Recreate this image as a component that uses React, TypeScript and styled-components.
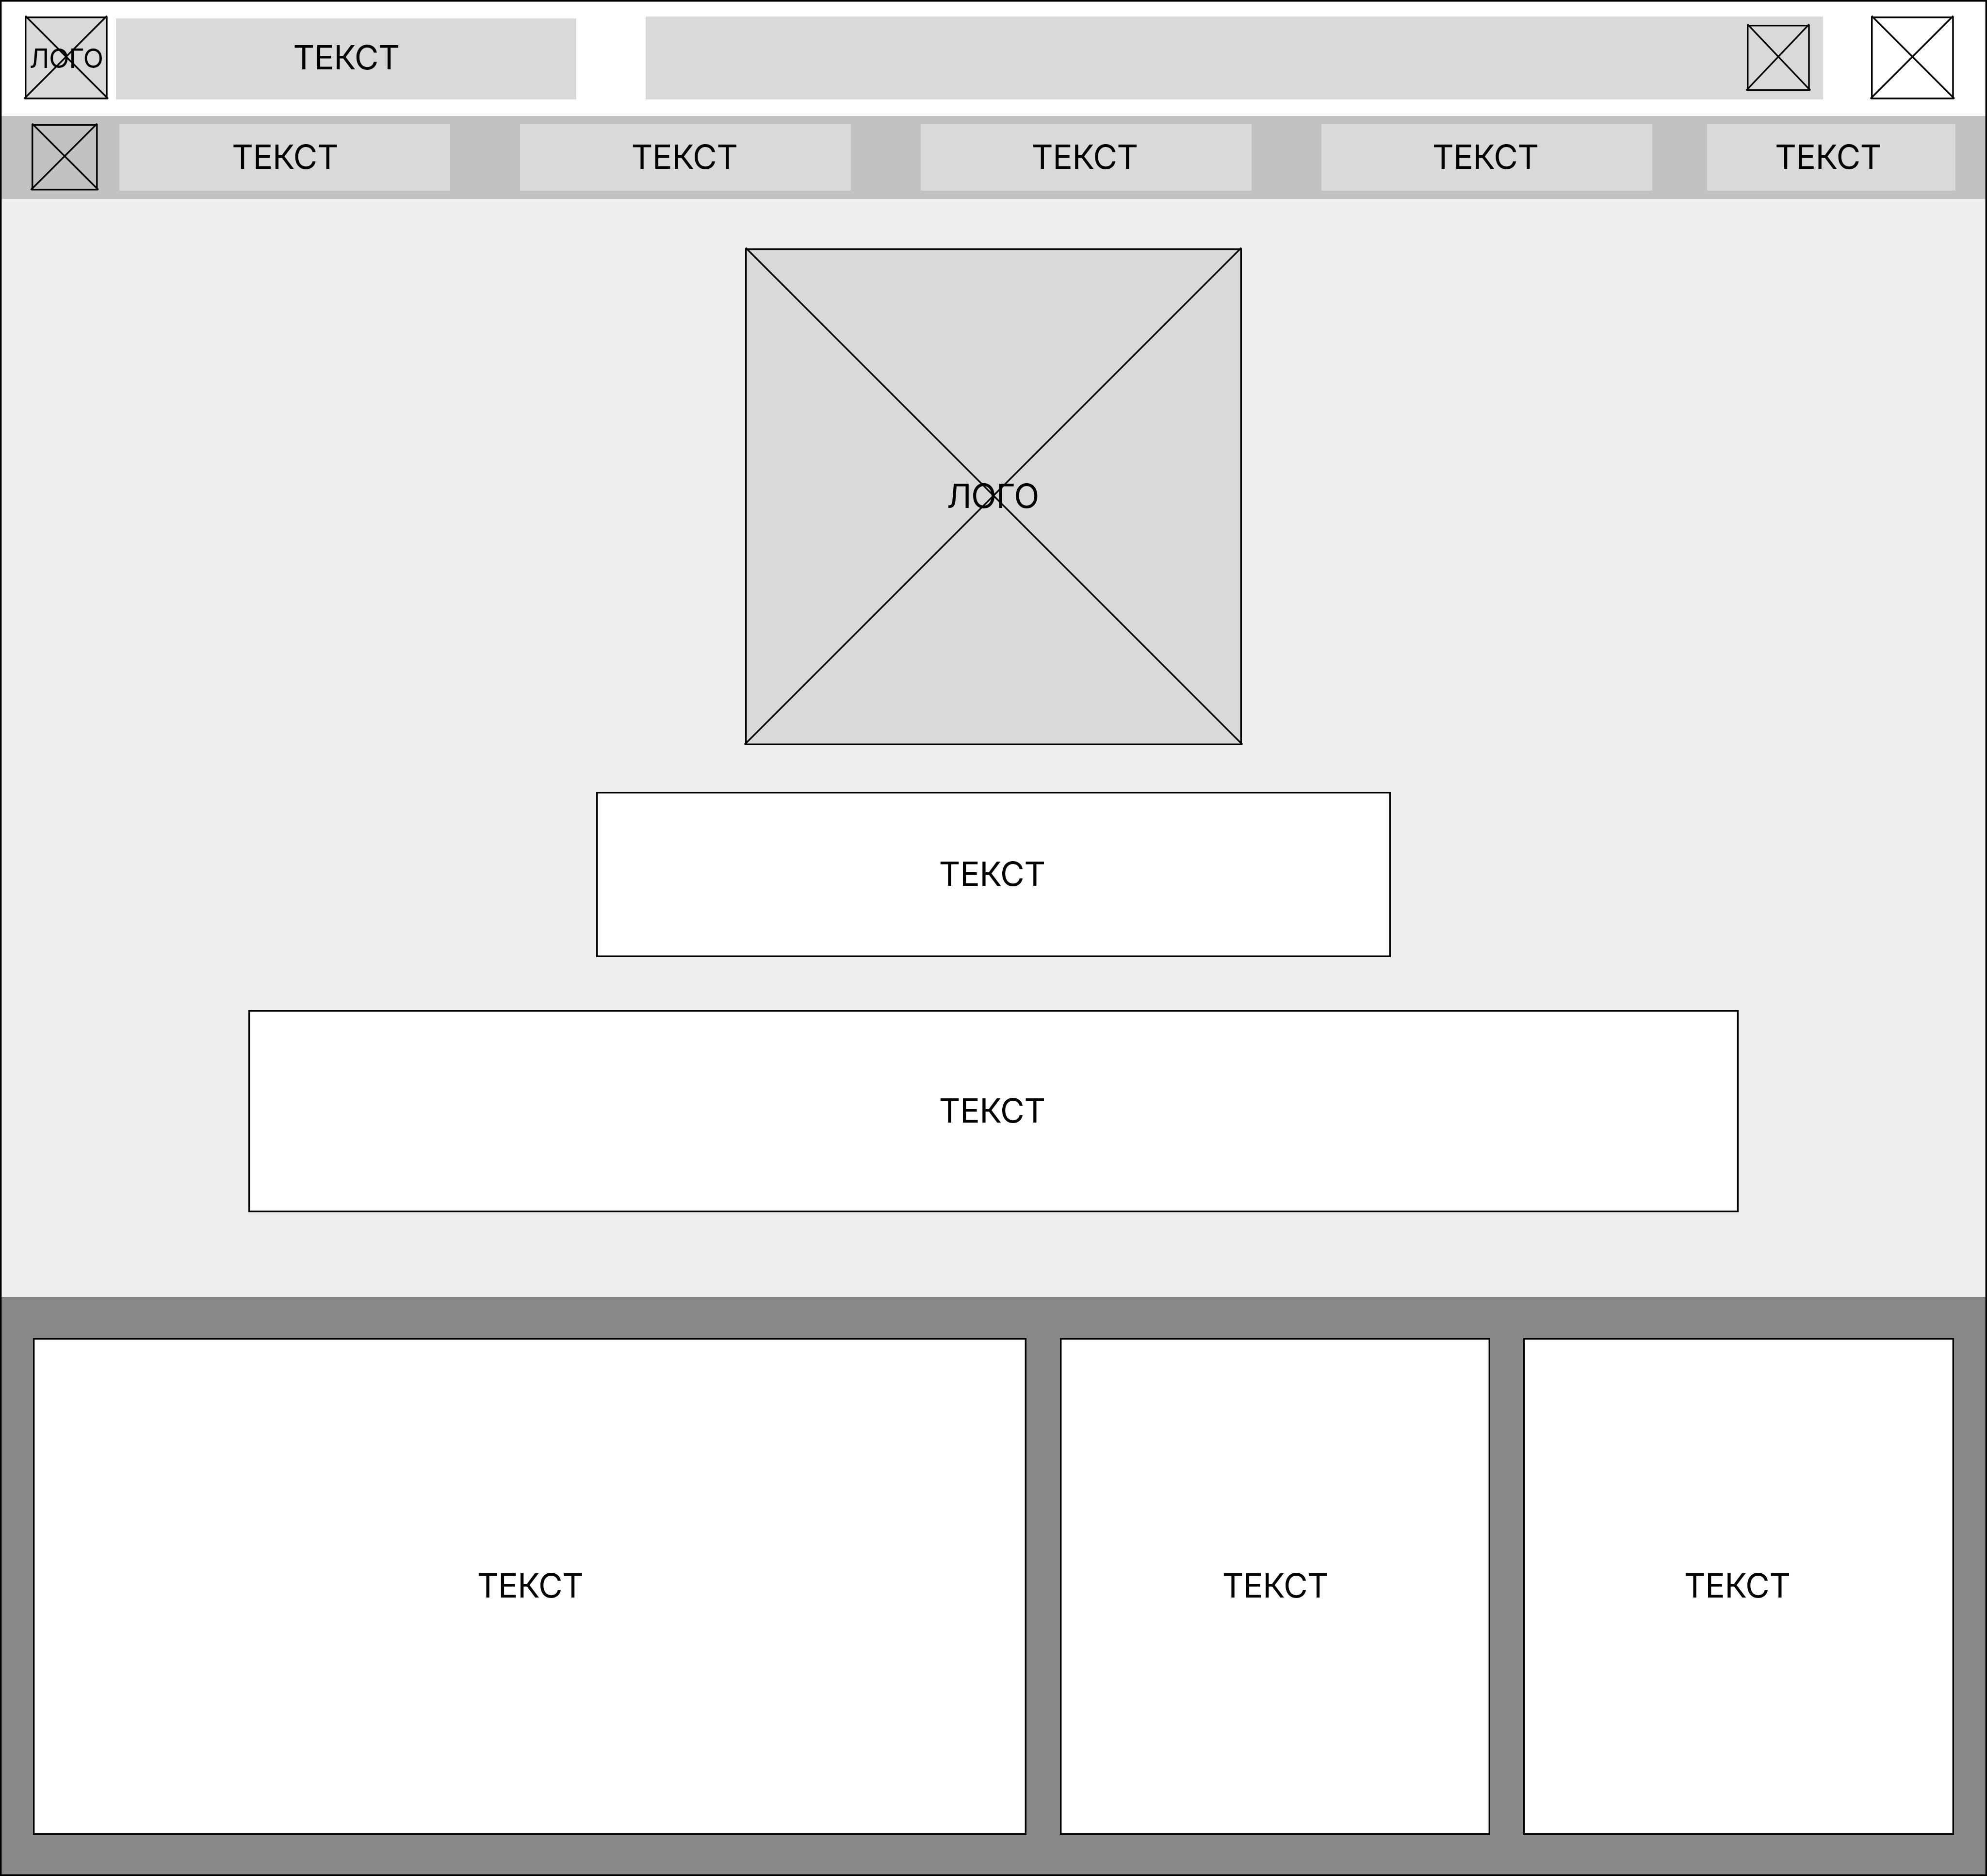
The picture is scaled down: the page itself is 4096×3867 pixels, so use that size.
import React from 'react';
import styled, { createGlobalStyle } from 'styled-components';

// The artboard is 4800 units wide and is drawn into a 4096px window.
const SCALE = 4096 / 4800;
const u = (n: number) => `${(n * SCALE).toFixed(4)}px`;
const STROKE = 4;

const GlobalStyle = createGlobalStyle`
  html, body { margin: 0; padding: 0; background: #ffffff; }
  *, *::before, *::after { box-sizing: border-box; }
`;

const Page = styled.div`
  position: relative;
  display: flex;
  flex-direction: column;
  width: 4096px;
  height: 3867px;
  overflow: hidden;
  background: #ffffff;
  color: #000000;
  font-family: Inter, 'Liberation Sans', sans-serif;
  font-weight: 400;

  &::after {
    content: '';
    position: absolute;
    inset: 0;
    box-shadow: inset 0 0 0 ${u(STROKE)} #000000;
    pointer-events: none;
  }
`;

const Label = styled.span<{ $size?: number; $dx?: number; $dy?: number }>`
  display: block;
  font-size: ${({ $size = 80 }) => u($size)};
  line-height: 1.2;
  letter-spacing: -0.0103em;
  white-space: nowrap;
  margin-left: ${({ $dx = 0 }) => u($dx * 2)};
  margin-top: ${({ $dy = 0 }) => u($dy * 2)};
`;

const Header = styled.header`
  display: flex;
  flex: none;
  align-items: flex-end;
  height: ${u(280)};
  padding: ${u(40)} ${u(80)} ${u(40)} ${u(60)};
`;

const Title = styled.div`
  display: flex;
  align-items: center;
  justify-content: center;
  flex: none;
  width: ${u(1112)};
  height: ${u(196)};
  margin-left: ${u(20)};
  background: #d9d9d9;
`;

const Search = styled.div`
  display: flex;
  align-items: center;
  justify-content: flex-end;
  flex: none;
  width: ${u(2844)};
  height: ${u(200)};
  margin: 0 ${u(116)} 0 ${u(168)};
  padding-right: ${u(32)};
  background: #d9d9d9;
`;

const Nav = styled.nav`
  display: flex;
  flex: none;
  align-items: center;
  height: ${u(200)};
  padding-left: ${u(76)};
  background: #c2c2c2;
`;

const NavItem = styled.div<{ $width: number; $gap: number }>`
  display: flex;
  align-items: center;
  justify-content: center;
  flex: none;
  width: ${({ $width }) => u($width)};
  height: ${u(160)};
  margin-left: ${({ $gap }) => u($gap)};
  background: #d9d9d9;
`;

const Main = styled.main`
  display: flex;
  flex: none;
  flex-direction: column;
  align-items: center;
  height: ${u(2652)};
  padding-top: ${u(120)};
  background: #efefef;
`;

const Panel = styled.section<{ $width: number; $height: number; $top?: number }>`
  display: flex;
  align-items: center;
  justify-content: center;
  flex: none;
  width: ${({ $width }) => u($width)};
  height: ${({ $height }) => u($height)};
  margin-top: ${({ $top = 0 }) => u($top)};
  background: #ffffff;
  box-shadow: inset 0 0 0 ${u(STROKE)} #000000;
`;

const Footer = styled.footer`
  display: flex;
  flex: none;
  gap: ${u(80)};
  height: ${u(1400)};
  padding: ${u(100)} ${u(80)};
  background: #888888;
`;

const PictureBox = styled.div<{ $width: number; $height: number; $fill: string }>`
  display: grid;
  flex: none;
  place-items: center;
  width: ${({ $width }) => u($width)};
  height: ${({ $height }) => u($height)};
  background: ${({ $fill }) => $fill};

  > * {
    grid-area: 1 / 1;
  }
`;

const Cross = styled.svg`
  display: block;
  width: 100%;
  height: 100%;
  overflow: visible;
`;

interface PictureProps {
  width: number;
  height: number;
  fill?: string;
  children?: React.ReactNode;
}

// Image placeholder: a framed box with both diagonals, each stroked on its upper side.
function Picture({ width: w, height: h, fill = 'transparent', children }: PictureProps) {
  const len = Math.hypot(w, h);
  const ox = ((STROKE / 2) * h) / len;
  const oy = ((STROKE / 2) * w) / len;
  return (
    <PictureBox $width={w} $height={h} $fill={fill}>
      <Cross viewBox={`0 0 ${w} ${h}`} fill="none" stroke="#000000" strokeWidth={STROKE}>
        <rect x={STROKE / 2} y={STROKE / 2} width={w - STROKE} height={h - STROKE} />
        <line x1={ox} y1={-oy} x2={w + ox} y2={h - oy} />
        <line x1={-ox} y1={h - oy} x2={w - ox} y2={-oy} />
      </Cross>
      {children}
    </PictureBox>
  );
}

const NAV_ITEMS = [
  { width: 800, gap: 52, dx: 0.6 },
  { width: 800, gap: 168, dx: -2.4 },
  { width: 800, gap: 168, dx: -3.4 },
  { width: 800, gap: 168, dx: -3.4 },
  { width: 600, gap: 132, dx: -7.8 },
];

const CARDS = [
  { width: 2400, dx: 0.8 },
  { width: 1040, dx: 0.8 },
  { width: 1040, dx: -3.4 },
];

export default function App() {
  return (
    <>
      <GlobalStyle />
      <Page>
        <Header>
          <Picture width={200} height={200} fill="#d9d9d9">
            <Label $size={64} $dx={0.3} $dy={1}>ЛОГО</Label>
          </Picture>
          <Title>
            <Label $dx={0.6} $dy={-2.65}>ТЕКСТ</Label>
          </Title>
          <Search>
            <Picture width={152} height={160} />
          </Search>
          <Picture width={200} height={200} />
        </Header>
        <Nav>
          <Picture width={160} height={160} />
          {NAV_ITEMS.map((item, i) => (
            <NavItem key={i} $width={item.width} $gap={item.gap}>
              <Label $dx={item.dx} $dy={-0.65}>ТЕКСТ</Label>
            </NavItem>
          ))}
        </Nav>
        <Main>
          <Picture width={1200} height={1200} fill="#d9d9d9">
            <Label $dx={-1.5} $dy={-0.65}>ЛОГО</Label>
          </Picture>
          <Panel $width={1920} $height={400} $top={112}>
            <Label $dx={-3.4} $dy={-0.65}>ТЕКСТ</Label>
          </Panel>
          <Panel $width={3600} $height={488} $top={128}>
            <Label $dx={-3.4} $dy={-0.65}>ТЕКСТ</Label>
          </Panel>
        </Main>
        <Footer>
          {CARDS.map((card, i) => (
            <Panel key={i} $width={card.width} $height={1200}>
              <Label $dx={card.dx} $dy={-0.65}>ТЕКСТ</Label>
            </Panel>
          ))}
        </Footer>
      </Page>
    </>
  );
}
